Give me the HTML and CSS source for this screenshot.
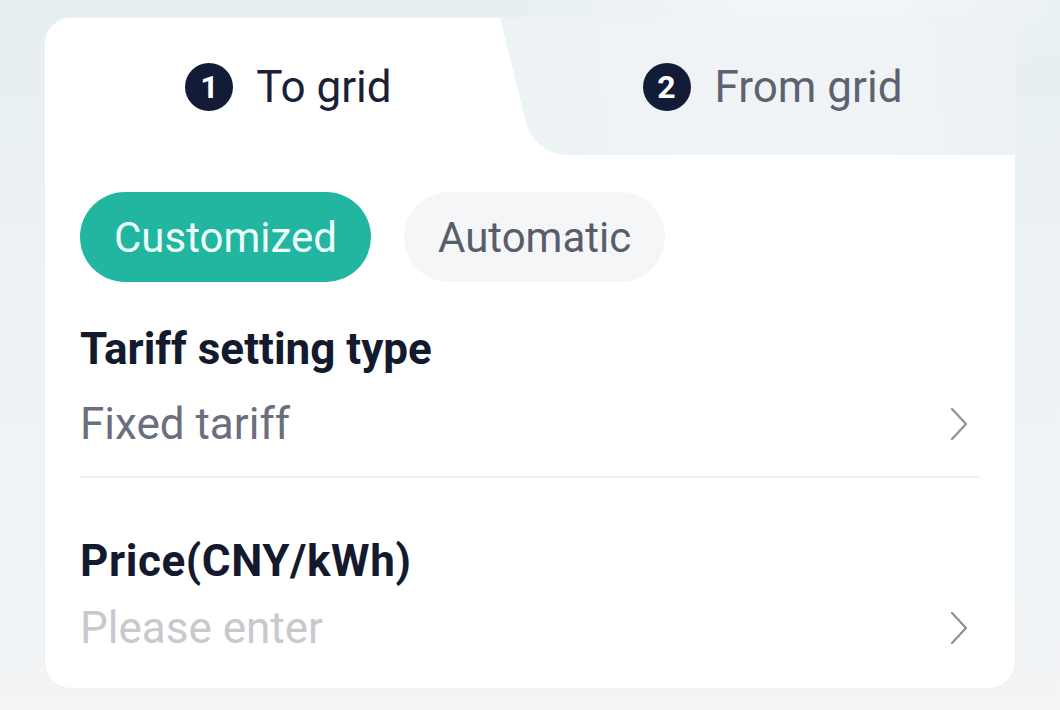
FILE: index.html
```html
<!DOCTYPE html>
<html lang="en">
<head>
<meta charset="utf-8">
<title>Tariff</title>
<link rel="stylesheet" href="styles.css">
</head>
<body>
<main class="card">
  <div class="tabs">
    <div class="tab tab-active">
      <span class="badge">1</span>
      <span class="tab-label">To grid</span>
    </div>
    <div class="tab tab-inactive">
      <span class="badge">2</span>
      <span class="tab-label">From grid</span>
    </div>
  </div>

  <div class="content">
    <div class="pills">
      <button class="pill pill-on">Customized</button>
      <button class="pill pill-off">Automatic</button>
    </div>

    <div class="row row-first">
      <div class="label">Tariff setting type</div>
      <div class="value-line">
        <span class="value">Fixed tariff</span>
        <svg class="chev" viewBox="0 0 20 34" width="20" height="34"><path d="M3 2 L17 17 L3 32" fill="none" stroke="#8d9098" stroke-width="2.2" stroke-linecap="round" stroke-linejoin="round"/></svg>
      </div>
    </div>

    <div class="row row-second">
      <div class="label">Price(CNY/kWh)</div>
      <div class="value-line value-line-2">
        <span class="value placeholder">Please enter</span>
        <svg class="chev" viewBox="0 0 20 34" width="20" height="34"><path d="M3 2 L17 17 L3 32" fill="none" stroke="#8d9098" stroke-width="2.2" stroke-linecap="round" stroke-linejoin="round"/></svg>
      </div>
    </div>
  </div>
</main>
</body>
</html>
```

FILE: styles.css
```css
* { box-sizing: border-box; }

html, body {
  margin: 0;
  padding: 0;
}

body {
  width: 1060px;
  height: 710px;
  overflow: hidden;
  font-family: Roboto, "Noto Sans", "Liberation Sans", sans-serif;
  background:
    radial-gradient(ellipse 500px 120px at 820px 0px, rgba(255,255,255,0.55), rgba(255,255,255,0) 70%),
    linear-gradient(180deg, #e6eef1 0%, #edf2f4 40%, #f2f4f6 100%);
  padding: 18px 45px 0 45px;
}

.card {
  background: #ffffff;
  border-radius: 26px;
  overflow: hidden;
  height: 670px;
  box-shadow: 0 0 0 1px rgba(236,241,244,0.9);
}

.tabs {
  display: grid;
  grid-template-columns: 1fr 1fr;
  height: 137px;
}

.tab {
  position: relative;
  display: flex;
  align-items: center;
  justify-content: center;
  gap: 23px;
}

.tab-active {
  background: #ffffff;
  color: #1a2035;
  padding-left: 2px;
}

.tab-inactive {
  color: #5d6270;
  z-index: 0;
  padding-left: 0;
  gap: 24px;
}

.tab-inactive::before {
  content: "";
  position: absolute;
  z-index: -1;
  top: 0;
  bottom: 0;
  left: -30px;
  right: -60px;
  transform-origin: top left;
  transform: skewX(14deg);
  border-bottom-left-radius: 32px;
  background: linear-gradient(100deg, #edf2f4 0%, #f1f4f6 50%, #edf1f3 100%);
}

.badge {
  width: 48px;
  height: 48px;
  border-radius: 50%;
  background: #131c36;
  color: #ffffff;
  font-weight: 700;
  font-size: 32px;
  display: flex;
  align-items: center;
  justify-content: center;
  flex: none;
}

.tab-label {
  font-size: 44px;
  line-height: 52px;
}

.content {
  padding: 37px 35px 0 35px;
}

.pills {
  display: flex;
  gap: 33px;
}

.pill {
  border: none;
  height: 90px;
  border-radius: 45px;
  padding: 0 34px;
  font-family: Roboto, "Noto Sans", sans-serif;
  font-size: 42px;
}

.pill-on {
  background: #22b59f;
  color: #ecfffa;
}

.pill-off {
  background: #f4f6f8;
  color: #585d6a;
}

.label {
  font-size: 44px;
  line-height: 52px;
  font-weight: 700;
  color: #141a2e;
}

.row-first {
  margin-top: 41px;
  padding-bottom: 26px;
  border-bottom: 2px solid #f0f2f4;
}

.row-second {
  margin-top: 57px;
}

.row-second .label {
  letter-spacing: 0.6px;
}

.value-line {
  display: flex;
  align-items: center;
  justify-content: space-between;
  margin-top: 23px;
  padding-right: 11px;
}

.value-line-2 {
  margin-top: 15px;
}

.value {
  font-size: 44px;
  line-height: 52px;
  color: #6a6f7e;
}

.placeholder {
  color: #c7c9cd;
}

.chev {
  display: block;
}
```
